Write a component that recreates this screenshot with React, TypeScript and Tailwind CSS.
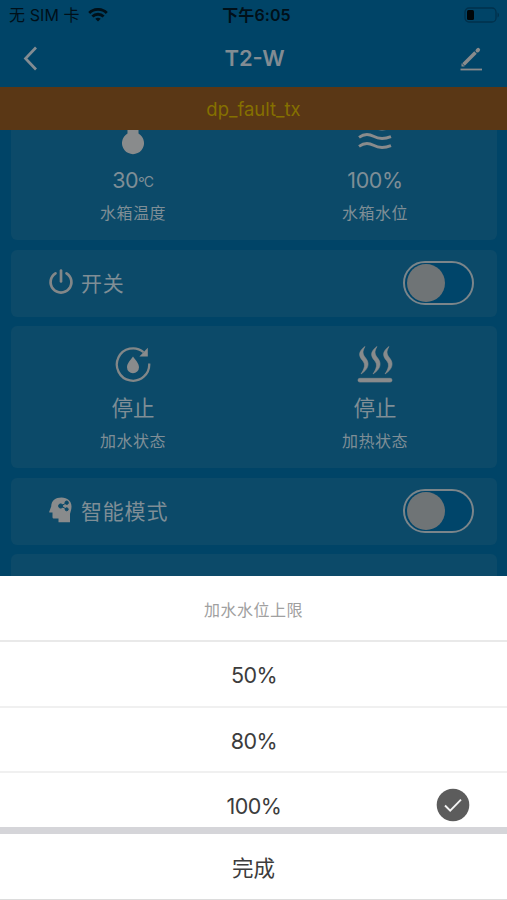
import React from 'react';

interface StatProps {
  icon: React.ReactNode;
  value: React.ReactNode;
  label: string;
}

const Stat: React.FC<StatProps> = ({ icon, value, label }) => (
  <div className="flex w-[242px] flex-col items-center pt-[19px]">
    {icon}
    <div className="mt-[11px] flex h-[28px] items-center text-[21.500px] leading-[28px]">
      {value}
    </div>
    <div className="mt-[8px] h-[22px] text-[16px] leading-[22px] tracking-[0.5px]">{label}</div>
  </div>
);

const StatCard: React.FC<{ stats: StatProps[] }> = ({ stats }) => (
  <div className="flex h-[142px] shrink-0 rounded-[6px] bg-[#0c4a69] pl-px">
    {stats.map((stat) => (
      <Stat key={stat.label} {...stat} />
    ))}
  </div>
);

const SwitchCard: React.FC<{ icon: React.ReactNode; label: string }> = ({ icon, label }) => (
  <div className="flex h-[67px] shrink-0 items-center rounded-[6px] bg-[#0c4a69] pr-[23px] pl-[37px]">
    <span className="pb-[3px]">{icon}</span>
    <span className="mt-px ml-[7px] text-[21px] tracking-[0.8px]">{label}</span>
    <button className="ml-auto flex h-[44px] w-[71px] items-center rounded-full border-2 border-[#7b858a] bg-[#00456a] pl-[1.500px]">
      <span className="h-[38px] w-[38px] rounded-full bg-[#6f7476]" />
    </button>
  </div>
);

const ThermometerIcon = () => (
  <svg width="38" height="38" viewBox="0 0 38 38" fill="#898b8c">
    <path d="M13.500 6a5.500 5.500 0 0 1 11 0v10.600a11 11 0 1 1-11 0z" />
  </svg>
);

const WavesIcon = () => (
  <svg width="38" height="38" viewBox="0 0 38 38" fill="none" stroke="#898b8c" strokeWidth="2.800">
    <path d="M3 10.800c5.500-4 10-3.500 14.500-1s9.500 3.500 17.500.3" />
    <path d="M3 20.300c5.500-4 10-3.500 14.500-1s9.500 3.500 17.500.3" />
    <path d="M3 29.300c5.500-4 10-3.500 14.500-1s9.500 3.500 17.500.3" />
  </svg>
);

const RefillIcon = () => (
  <svg width="38" height="38" viewBox="0 0 38 38" fill="none">
    <path d="M35.200 18.500A16.200 16.200 0 1 1 29.500 7.200" stroke="#838788" strokeWidth="2.300" />
    <path d="M33.800 2.800v8.800h-8.400z" fill="#898b8c" />
    <path d="M19 11.500c2.200 3.200 6 6.600 6 10.800a6 5.900 0 0 1-12 0c0-4.200 3.800-7.600 6-10.800z" fill="#898b8c" />
  </svg>
);

const HeatIcon = () => (
  <svg width="38" height="38" viewBox="0 0 38 38" fill="#898b8c" stroke="#898b8c" strokeWidth=".6">
    <path d="M9 1.500C1.500 7 3 11.500 6.500 15.500s2 8-1.500 13.500C13 24 13.500 18 10 13.500S6 7 9 1.500z" />
    <path d="M21 1.500C13.500 7 15 11.500 18.500 15.500s2 8-1.500 13.500C25 24 25.500 18 22 13.500S18 7 21 1.500z" />
    <path d="M33 1.500C25.500 7 27 11.500 30.500 15.500s2 8-1.500 13.500C37 24 37.500 18 34 13.500S30 7 33 1.500z" />
    <rect x="2" y="33.300" width="34" height="3.800" rx="1.800" />
  </svg>
);

const PowerIcon = () => (
  <svg width="26" height="28" viewBox="0 0 26 28" fill="none" stroke="#838788" strokeWidth="2.700" strokeLinecap="round">
    <path d="M13 2.500v11" />
    <path d="M7.500 5.300a10.400 10.400 0 1 0 11 0" />
  </svg>
);

const HeadIcon = () => (
  <svg width="26" height="28" viewBox="0 0 26 28">
    <path
      d="M3.200 10.500C3.300 4.500 7.500 1.500 13.500 1.500c6 0 10 3.500 10 9 0 3-.9 4.800-1.500 7.500v8.200H10.500v-3.700H6c-1 0-1.500-.6-1.500-1.600v-4.400H1.800c-.6 0-.8-.5-.5-1z"
      fill="#898b8c"
    />
    <g fill="#0c4a69" stroke="#0c4a69" strokeWidth="1">
      <path d="M18.500 6.800 13 10l5.500 3.200" fill="none" />
      <circle cx="18.700" cy="6.700" r="1.700" />
      <circle cx="12.700" cy="10" r="2.100" />
      <circle cx="18.700" cy="13.300" r="1.500" />
    </g>
  </svg>
);

const StatusBar = () => (
  <div className="grid h-[30px] grid-cols-3 items-center pr-[7px] pl-[9px] text-[16px] text-[#001019]">
    <div className="flex items-center">
      <span className="tracking-[0.1px]">无 SIM 卡</span>
      <svg className="ml-[8px]" width="20" height="14" viewBox="0 0 20 14" fill="none" stroke="#001019" strokeWidth="2.800">
        <path d="M1.200 5a12.500 12.500 0 0 1 17.600 0" />
        <path d="M4.400 8.600a7.900 7.900 0 0 1 11.200 0" />
        <path d="M7.300 10.800a4.200 4.200 0 0 1 5.400 0L10 13.600z" fill="#001019" stroke="none" />
      </svg>
    </div>
    <div className="pl-[4px] text-center text-[16px] font-semibold tracking-[0.1px] whitespace-nowrap">下午6:05</div>
    <svg className="ml-auto" width="36" height="16" viewBox="0 0 36 16">
      <rect x="1" y="1" width="31" height="14" rx="4" fill="none" stroke="#00314c" strokeWidth="1.300" />
      <rect x="3" y="3" width="7" height="10" rx="1.500" fill="#000608" />
      <path d="M33.500 5.500c2 .8 2 4.200 0 5z" fill="#00314c" />
    </svg>
  </div>
);

const options = ['50%', '80%', '100%'];
const selected = '100%';

const App: React.FC = () => (
  <div className="flex h-[900px] w-[507px] flex-col overflow-hidden bg-[#004467] font-[Inter,'Noto_Sans_CJK_SC',sans-serif] text-[#7f8e96]">
    <StatusBar />

    <header className="flex h-[57px] shrink-0 items-center justify-between pr-[22px] pl-[22px]">
      <svg width="18" height="26" viewBox="0 0 18 26" fill="none" stroke="#838c92" strokeWidth="2.700">
        <path d="M14 1.500 3.500 12.500 14 23.500" />
      </svg>
      <h1 className="pl-[10px] text-[22px] font-semibold text-[#828c93]">T2-W</h1>
      <svg width="26" height="26" viewBox="0 0 26 26" fill="none" stroke="#898b8c">
        <path d="M4.500 18.500 16.500 6.500" strokeWidth="3.600" />
        <path d="m18.400 4.600.8-.8" strokeWidth="3.800" strokeLinecap="round" />
        <path d="M2.500 20.500v-3.200l3.200 3.200z" fill="#898b8c" stroke="none" />
        <path d="M1.500 23.500h21.500" strokeWidth="1.800" />
      </svg>
    </header>

    <div className="flex h-[43px] shrink-0 items-center justify-center bg-[#5a3715] pt-[2px] text-[18.500px] text-[#857000]">
      dp_fault_tx
    </div>

    <main className="flex h-[446px] shrink-0 flex-col gap-[9.500px] overflow-hidden pr-[10px] pl-[11px]">
      <div className="-mt-[32px] shrink-0">
        <StatCard
          stats={[
            {
              icon: <ThermometerIcon />,
              value: (
                <>
                  <span className="tracking-[-0.5px]">30</span>
                  <span className="pt-[5px] text-[15px] tracking-[-1.200px]">°</span>
                  <span className="pt-[4px] text-[14px]">C</span>
                </>
              ),
              label: '水箱温度',
            },
            {
              icon: <WavesIcon />,
              value: <span className="tracking-[-0.400px]">100%</span>,
              label: '水箱水位',
            },
          ]}
        />
      </div>
      <SwitchCard icon={<PowerIcon />} label="开关" />
      <StatCard
        stats={[
          { icon: <RefillIcon />, value: '停止', label: '加水状态' },
          { icon: <HeatIcon />, value: '停止', label: '加热状态' },
        ]}
      />
      <SwitchCard icon={<HeadIcon />} label="智能模式" />
      <div className="h-[67px] shrink-0 rounded-[6px] bg-[#0c4a69]" />
    </main>

    <section className="flex h-[324px] shrink-0 flex-col bg-white text-[#3c3c3c]">
      <div className="flex h-[66px] shrink-0 items-center justify-center border-b-2 border-[#e9e9e9] pt-[3px] text-[16px] tracking-[0.5px] text-[#a0a0a0]">
        加水水位上限
      </div>
      <ul className="h-[185px] shrink-0 overflow-hidden">
        {options.map((option) => (
          <li
            key={option}
            className="grid h-[65.500px] grid-cols-[1fr_auto_1fr] items-center border-b-2 border-[#f0f0f0] pr-[37px] pl-[37px]"
          >
            <span />
            <span className="pt-[3px] pl-px text-[21.500px] tracking-[-0.500px]">{option}</span>
            {option === selected && (
              <svg className="ml-auto" width="34" height="34" viewBox="0 0 34 34" fill="none">
                <circle cx="17" cy="17" r="16.300" fill="#5c5c5c" />
                <path d="m9 17.500 5.200 5.200 10.800-11" stroke="#f4f4f4" strokeWidth="1.900" />
              </svg>
            )}
          </li>
        ))}
      </ul>
      <div className="h-[7px] shrink-0 bg-[#d5d5d9]" />
      <button className="flex h-[66px] items-center justify-center border-b border-[#dcdcdc] pt-[3px] text-[21.500px]">
        完成
      </button>
    </section>
  </div>
);

export default App;
